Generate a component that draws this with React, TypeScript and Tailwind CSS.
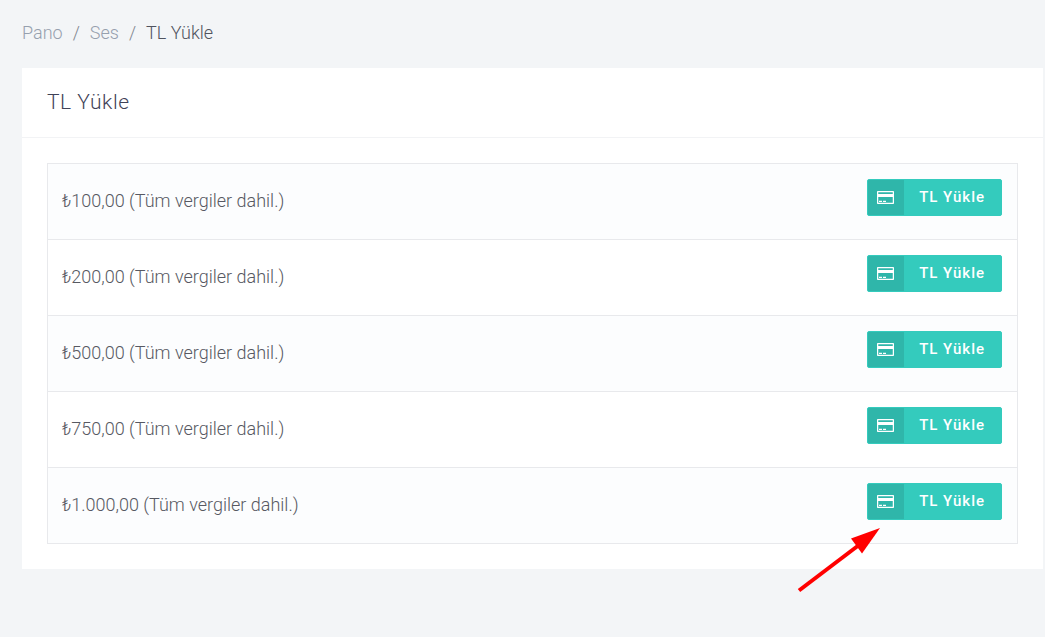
const amounts: string[] = ['100,00', '200,00', '500,00', '750,00', '1.000,00'];

function CardIcon() {
  return (
    <svg width="17" height="13" viewBox="0 0 17 13" fill="none" aria-hidden="true">
      <rect x="0.6" y="0.6" width="15.8" height="11.8" rx="0.5" stroke="#fff" strokeWidth="1.3" />
      <path d="M1 3h15v3H1z" fill="#fff" />
      <path d="M2 10.3h3M6 10.3h3" stroke="#fff" strokeWidth="1.2" />
    </svg>
  );
}

function PointerArrow() {
  return (
    <svg
      className="pointer-events-none absolute top-full right-full -mr-3.5 mt-2"
      width="84"
      height="66"
      viewBox="0 0 84 66"
      aria-hidden="true"
    >
      <path d="M2 62.5L62 17" stroke="#f00" strokeWidth="4" />
      <path d="M83 0L54 10.5L65 25.5Z" fill="#f00" />
    </svg>
  );
}

function LoadButton({ marked }: { marked: boolean }) {
  return (
    <div className="relative mb-2 ml-auto w-fit">
      <button
        type="button"
        className="flex h-[37px] items-stretch overflow-hidden rounded-xs border border-[#34cbbd] bg-[#34cbbd] text-[15px] font-medium tracking-[1px] text-white"
      >
        <span className="flex w-9 items-center bg-[#2fb6aa] pl-[9px]">
          <CardIcon />
        </span>
        <span className="pr-4 pl-[15px] leading-[34px]">TL Yükle</span>
      </button>
      {marked && <PointerArrow />}
    </div>
  );
}

export default function App() {
  return (
    <div className="min-h-screen bg-[#f3f5f7] pr-0.5 pb-10 pl-[22px] font-[Roboto,sans-serif] text-lg font-light text-[#575962]">
      <nav aria-label="Breadcrumb" className="pt-[19px] pb-[21px]">
        <ol className="flex gap-2.5 leading-7 text-[#96a0ae]">
          <li><a href="#pano">Pano</a></li>
          <li aria-hidden="true" className="text-[#7f858f]">/</li>
          <li><a href="#ses">Ses</a></li>
          <li aria-hidden="true" className="text-[#7f858f]">/</li>
          <li aria-current="page" className="text-[#50535e]">TL Yükle</li>
        </ol>
      </nav>
      <main className="bg-white">
        <header className="border-b border-[#f2f3f5] px-[25px] py-5">
          <h1 className="text-[21px] leading-[29px] tracking-wide text-[#3f4257]">TL Yükle</h1>
        </header>
        <div className="p-[25px]">
          <table className="w-full border-collapse">
            <tbody>
              {amounts.map((amount, index) => (
                <tr key={amount} className="border border-[#e8e9ec] odd:bg-[#fcfdfe]">
                  <td className="px-3.5 pb-0.5 align-middle">₺{amount} (Tüm vergiler dahil.)</td>
                  <td className="p-[15px]">
                    <LoadButton marked={index === amounts.length - 1} />
                  </td>
                </tr>
              ))}
            </tbody>
          </table>
        </div>
      </main>
    </div>
  );
}
